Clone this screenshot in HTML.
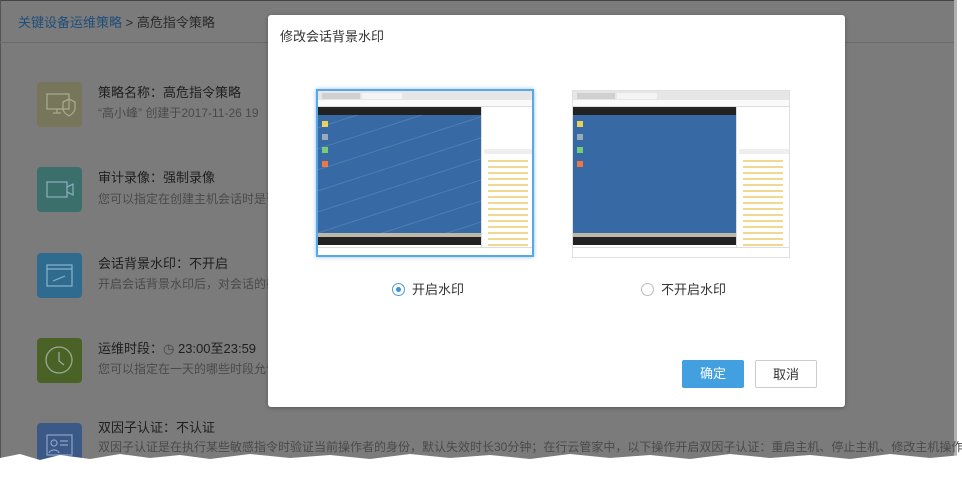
<!DOCTYPE html>
<html><head><meta charset="utf-8"><style>
*{margin:0;padding:0;box-sizing:border-box}
body{width:962px;height:477px;background:#fff;position:relative;overflow:hidden;font-family:"Liberation Sans","Noto Sans CJK SC",sans-serif}
.bg{position:absolute;left:0;top:0}
.crumb{position:absolute;left:18px;top:12px;font-size:13px;color:#2a2a2a}
.crumb b{font-weight:normal;color:#1f4e7a}
.ico{position:absolute;left:37px;width:45px;height:45px}
.t{position:absolute;left:98px;font-size:13px;color:#1e1e1e}
.d{position:absolute;left:98px;font-size:12px;color:#4a4a4a;white-space:nowrap}
.modal{position:absolute;left:268px;top:15px;width:577px;height:392px;background:#fff;border-radius:3px;box-shadow:0 1px 4px rgba(0,0,0,.3)}
.mt{position:absolute;left:12px;top:11px;font-size:13px;color:#333}
.shot{position:absolute;width:218px;height:168px;background:#fff;overflow:hidden}
.shot div{position:absolute}
.radio{position:absolute;top:264px;font-size:13px;color:#333}
.radio i{display:inline-block;width:13px;height:13px;border:1px solid #bbb;border-radius:50%;vertical-align:-2px;margin-right:7px;position:relative}
.btn{position:absolute;top:345px;width:62px;height:28px;font-size:13px;text-align:center;line-height:27px;border-radius:2px}
</style></head><body>
<svg class="bg" width="962" height="477">
<rect x="0" y="0" width="957" height="462" fill="#b0b0b0"/>
<rect x="0" y="0" width="954" height="460" fill="#7b7b7b"/>
<rect x="0" y="0" width="954" height="1" fill="#444"/>
<rect x="0" y="0" width="1" height="460" fill="#555"/>
<rect x="0" y="42" width="954" height="1" fill="#6a6a6a"/>
<rect x="37" y="82" width="45" height="45" rx="4" fill="#77765b"/>
<rect x="37" y="167" width="45" height="45" rx="4" fill="#3a6f6c"/>
<rect x="37" y="253" width="45" height="45" rx="4" fill="#2e6b8f"/>
<rect x="37" y="338" width="45" height="45" rx="4" fill="#4b6227"/>
<rect x="37" y="423" width="45" height="45" rx="4" fill="#3b5987"/>
</svg>
<div class="crumb"><b>关键设备运维策略</b> &gt; 高危指令策略</div>
<div class="ico" style="top:82px"><svg width="45" height="45" fill="none" stroke="#a8a890" stroke-width="1.3"><rect x="10" y="12" width="22" height="15"/><path d="M16 31h8M20 27v4M26 20l6-3 6 3v6c0 4-3 6-6 8-3-2-6-4-6-8z"/></svg></div>
<div class="t" style="top:82px">策略名称：高危指令策略</div>
<div class="d" style="top:104px">“高小峰” 创建于2017-11-26 19</div>
<div class="ico" style="top:167px"><svg width="45" height="45" fill="none" stroke="#8ab" stroke-width="1.3"><rect x="10" y="15" width="20" height="15"/><path d="M30 20l6-3v11l-6-3"/></svg></div>
<div class="t" style="top:167px">审计录像：强制录像</div>
<div class="d" style="top:190px">您可以指定在创建主机会话时是否</div>
<div class="ico" style="top:253px"><svg width="45" height="45" fill="none" stroke="#8ab3cc" stroke-width="1.2"><rect x="10" y="12" width="25" height="21"/><path d="M10 16h25M16 28l12-5"/></svg></div>
<div class="t" style="top:253px">会话背景水印：不开启</div>
<div class="d" style="top:275px">开启会话背景水印后，对会话的截</div>
<div class="ico" style="top:338px"><svg width="45" height="45" fill="none" stroke="#9a9" stroke-width="1.3"><circle cx="22" cy="22" r="13"/><path d="M22 14v9l5 4"/></svg></div>
<div class="t" style="top:338px">运维时段：<span style="color:#444">◷</span> 23:00至23:59</div>
<div class="d" style="top:360px">您可以指定在一天的哪些时段允许</div>
<div class="ico" style="top:423px"><svg width="45" height="45" fill="none" stroke="#8fa2c4" stroke-width="1.2"><rect x="10" y="12" width="25" height="20"/><circle cx="17" cy="20" r="3"/><path d="M23 18h8M23 22h8M12 30c1-4 9-4 10 0"/></svg></div>
<div class="t" style="top:417px">双因子认证：不认证</div>
<div class="d" style="top:438px">双因子认证是在执行某些敏感指令时验证当前操作者的身份，默认失效时长30分钟；在行云管家中，以下操作开启双因子认证：重启主机、停止主机、修改主机操作系统密</div>
<svg style="position:absolute;left:0;top:446px" width="962" height="31"><path d="M0 12 L20 8 40 14 60 9 90 13 120 8 150 12 180 9 210 13 250 8 290 12 330 9 370 13 410 8 450 12 490 9 530 13 570 8 610 12 650 9 690 13 730 8 770 12 810 9 850 13 890 8 930 12 962 9 V31 H0Z" fill="#fff"/></svg>
<div class="modal">
<div class="mt">修改会话背景水印</div>
<div class="shot" style="left:48px;top:74px;border:2px solid #5aa7e6;box-shadow:0 0 4px #8cc4f0">
 <div style="left:0;top:0;width:218px;height:9px;background:#e6e6e6"></div>
 <div style="left:4px;top:2px;width:38px;height:6px;background:#d0d0d0"></div>
 <div style="left:44px;top:2px;width:40px;height:6px;background:#f4f4f4"></div>
 <div style="left:0;top:9px;width:218px;height:7px;background:#fafafa;border-bottom:1px solid #ddd"></div>
 <div style="left:0;top:16px;width:163px;height:8px;background:#222"></div>
 <div style="left:0;top:24px;width:163px;height:118px;background:#376aa5"></div>
 <div style="left:4px;top:30px;width:6px;height:6px;background:#e8d060"></div>
 <div style="left:4px;top:43px;width:6px;height:6px;background:#9ab"></div>
 <div style="left:4px;top:56px;width:6px;height:6px;background:#7c7"></div>
 <div style="left:4px;top:70px;width:6px;height:6px;background:#e74"></div>
 <div style="left:0;top:142px;width:163px;height:4px;background:#bcb9a8"></div>
 <div style="left:0;top:146px;width:163px;height:8px;background:#222"></div>
 <div style="left:163px;top:16px;width:55px;height:140px;background:#fff;border-left:1px solid #ddd"></div>
 <div style="left:166px;top:58px;width:50px;height:5px;background:#eee"></div>
 <div style="left:170px;top:66px;width:40px;height:90px;background:repeating-linear-gradient(#fff 0 3px,#f0d890 3px 5px,#fff 5px 6px)"></div>
 <div style="left:0;top:156px;width:218px;height:12px;background:#fff;border-top:1px solid #ddd"></div>
 <div style="left:0;top:24px;width:163px;height:118px;background:repeating-linear-gradient(-18deg,transparent 0 10px,rgba(255,255,255,.12) 10px 11px,transparent 11px 20px)"></div>
</div>
<div class="shot" style="left:304px;top:75px;border:1px solid #e0e0e0">
 <div style="left:0;top:0;width:218px;height:9px;background:#e6e6e6"></div>
 <div style="left:4px;top:2px;width:38px;height:6px;background:#d0d0d0"></div>
 <div style="left:44px;top:2px;width:40px;height:6px;background:#f4f4f4"></div>
 <div style="left:0;top:9px;width:218px;height:7px;background:#fafafa;border-bottom:1px solid #ddd"></div>
 <div style="left:0;top:16px;width:163px;height:8px;background:#222"></div>
 <div style="left:0;top:24px;width:163px;height:118px;background:#376aa5"></div>
 <div style="left:4px;top:30px;width:6px;height:6px;background:#e8d060"></div>
 <div style="left:4px;top:43px;width:6px;height:6px;background:#9ab"></div>
 <div style="left:4px;top:56px;width:6px;height:6px;background:#7c7"></div>
 <div style="left:4px;top:70px;width:6px;height:6px;background:#e74"></div>
 <div style="left:0;top:142px;width:163px;height:4px;background:#bcb9a8"></div>
 <div style="left:0;top:146px;width:163px;height:8px;background:#222"></div>
 <div style="left:163px;top:16px;width:55px;height:140px;background:#fff;border-left:1px solid #ddd"></div>
 <div style="left:166px;top:58px;width:50px;height:5px;background:#eee"></div>
 <div style="left:170px;top:66px;width:40px;height:90px;background:repeating-linear-gradient(#fff 0 3px,#f0d890 3px 5px,#fff 5px 6px)"></div>
 <div style="left:0;top:156px;width:218px;height:12px;background:#fff;border-top:1px solid #ddd"></div>
</div>
<div class="radio" style="left:124px"><i style="border-color:#4a9de0"><span style="position:absolute;left:3px;top:3px;width:5px;height:5px;border-radius:50%;background:#3d8fd9"></span></i>开启水印</div>
<div class="radio" style="left:373px"><i></i>不开启水印</div>
<div class="btn" style="left:414px;background:#43a0e0;color:#fff">确定</div>
<div class="btn" style="left:487px;border:1px solid #ccc;color:#333">取消</div>
</div>
</body></html>
